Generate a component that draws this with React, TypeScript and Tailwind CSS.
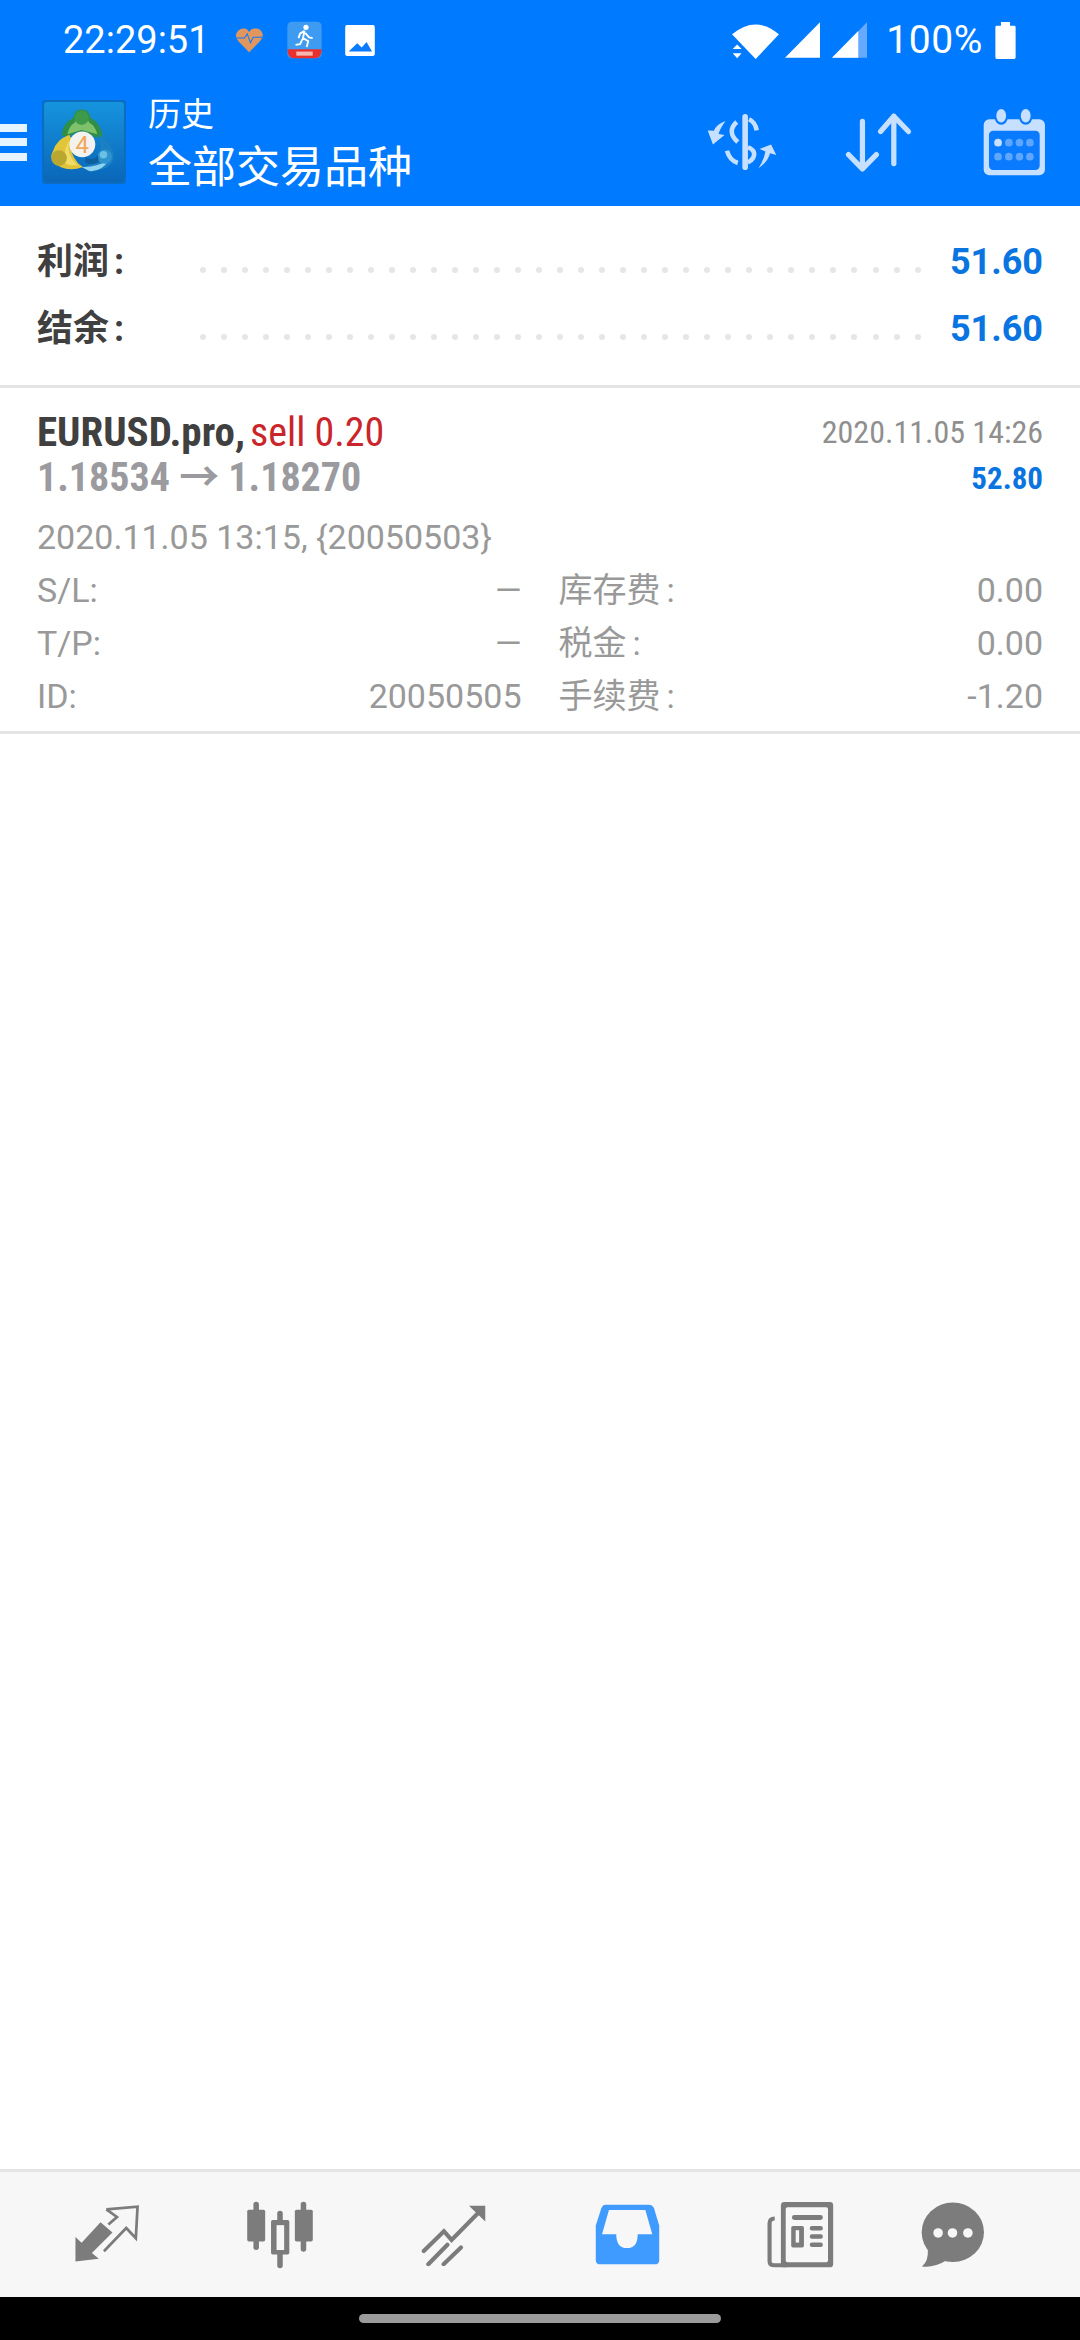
const Z = 'font-["Roboto","Noto_Sans_CJK_SC",sans-serif]';

function Heart() {
  return (
    <svg viewBox="680 82 86 76" className="w-[29px] h-[26px] ml-[25px]">
      <path d="M722,156 L690,124 Q680,112 684,100 Q692,84 710,86 Q718,88 722,96 Q728,86 738,86 Q756,84 762,102 Q764,114 754,124 Z" fill="#e0975f" />
      <path d="M684,114 L708,114 L716,102 L726,128 L734,112 L762,112" fill="none" stroke="#0a7bff" strokeWidth="3" />
    </svg>
  );
}

function Runner() {
  return (
    <svg viewBox="838 70 92 102" className="w-[35px] h-[38px] ml-[23px]">
      <rect x="838" y="72" width="92" height="98" rx="12" fill="#3d9cf2" />
      <circle cx="888" cy="87" r="7" fill="#fff" />
      <path d="M884,96 L872,104 L868,116 M884,96 L880,116 L894,124 L890,140 M880,116 L872,132 L860,134 M886,102 L896,114 L906,116" fill="none" stroke="#fff" strokeWidth="5" />
      <path d="M838,146 L930,146 Q930,170 912,170 L856,170 Q838,170 838,146 Z" fill="#e8302f" />
      <rect x="862" y="152" width="44" height="11" fill="#f7b7b0" />
    </svg>
  );
}

function ImageIcon() {
  return (
    <svg viewBox="1000 75 86 90" className="w-[30px] h-[31px] ml-[23px]">
      <rect x="1000" y="75" width="86" height="90" rx="6" fill="#fff" />
      <path d="M1010,152 L1035,128 L1048,140 L1062,124 L1078,152 Z" fill="#0a7bff" />
    </svg>
  );
}

function Wifi() {
  return (
    <svg viewBox="548 62 140 112" className="w-[48px] h-[39px]">
      <path d="M548,100 Q617,42 685,100 L617,172 Z" fill="#fff" />
      <path d="M550,143 L576,143 L563,130 Z M550,155 L576,155 L563,170 Z" fill="#fff" />
    </svg>
  );
}

function Signal({ dim }: { dim?: boolean }) {
  return (
    <svg viewBox="0 0 100 102" className="w-[35px] h-[36px]">
      <path d="M0,102 L100,0 L100,102 Z" fill={dim ? "#66aaff" : "#fff"} />
      {dim && <path d="M0,102 L75,25 L75,102 Z" fill="#fff" />}
    </svg>
  );
}

function Battery() {
  return (
    <svg viewBox="0 0 58 106" className="w-[21px] h-[37px]">
      <path d="M16,0 H42 V11 H54 Q58,11 58,15 V102 Q58,106 54,106 H4 Q0,106 0,102 V15 Q0,11 4,11 H16 Z" fill="#fff" />
    </svg>
  );
}

function MT4Logo() {
  return (
    <svg viewBox="12 10 246 246" className="w-[84px] h-[84px] shrink-0">
      <defs>
        <linearGradient id="lg" x1="0" y1="0" x2="0" y2="1">
          <stop offset="0" stopColor="#1694de" />
          <stop offset="1" stopColor="#0a66b8" />
        </linearGradient>
      </defs>
      <rect x="12" y="10" width="246" height="246" rx="10" fill="#0c6cc2" />
      <rect x="18" y="16" width="234" height="234" rx="8" fill="url(#lg)" />
      <path d="M128,38 Q150,38 154,62 Q186,78 190,120 L165,118 Q150,104 128,102 Q105,104 92,118 L70,114 Q72,78 104,62 Q108,38 128,38 Z" fill="#2f8f45" />
      <path d="M128,60 Q146,62 150,76 Q168,86 174,110 L128,98 L86,110 Q92,86 108,76 Q112,62 128,60 Z" fill="#7fc06a" />
      <circle cx="128" cy="62" r="21" fill="#3c9a4a" />
      <path d="M92,112 L100,128 Q88,160 118,196 L132,206 Q90,222 56,200 Q30,182 44,160 Q54,126 92,112 Z" fill="#e0c53a" />
      <path d="M92,128 Q80,168 116,200 Q88,204 78,192 Q76,150 92,128 Z" fill="#f0dc66" />
      <circle cx="62" cy="180" r="23" fill="#b9a730" />
      <path d="M176,112 Q212,130 222,166 Q226,200 190,212 Q160,222 128,206 Q170,200 182,176 Q186,140 176,112 Z" fill="#1b7fc4" />
      <path d="M128,206 Q172,208 208,186 Q186,222 150,218 Z" fill="#8ed4ee" />
      <circle cx="196" cy="176" r="21" fill="#2f93cf" />
      <circle cx="192" cy="170" r="11" fill="#6cc0e4" />
      <path d="M140,178 Q160,190 176,172 L178,192 Q156,204 138,192 Z" fill="#0d5f9e" />
      <circle cx="130" cy="140" r="38" fill="#f4f2ee" />
      <text x="130" y="166" textAnchor="middle" fontSize="70" fontFamily="Roboto, sans-serif" fill="#f0a95a">4</text>
    </svg>
  );
}

function DollarIcon() {
  return (
    <svg viewBox="480 345 200 160" className="w-[70px] h-[56px]" fill="#c8e0ff">
      <rect x="581" y="345" width="16" height="160" rx="8" />
      <path d="M565,368 Q535,395 568,425" fill="none" stroke="#c8e0ff" strokeWidth="13" />
      <path d="M600,360 Q618,368 622,392" fill="none" stroke="#c8e0ff" strokeWidth="13" />
      <path d="M597,440 Q622,450 612,470 Q606,480 597,483" fill="none" stroke="#c8e0ff" strokeWidth="13" />
      <path d="M537,450 Q545,478 568,485" fill="none" stroke="#c8e0ff" strokeWidth="13" />
      <path d="M533,365 Q505,375 500,393 L482,392 L497,432 L530,405 L513,402 Q518,385 533,365 Z" />
      <path d="M627,500 Q655,480 660,457 L678,462 L663,432 L630,445 L647,452 Q642,478 627,500 Z" />
    </svg>
  );
}

function SortIcon() {
  return (
    <svg viewBox="880 340 195 172" className="w-[68px] h-[60px]" fill="none" stroke="#c8e0ff" strokeWidth="15" strokeLinecap="round" strokeLinejoin="round">
      <path d="M930,367 V503 M890,462 L930,503 L970,462" />
      <path d="M1020,488 V352 M982,396 L1020,352 L1062,396" />
    </svg>
  );
}

function CalendarIcon() {
  const xs = [1326, 1357, 1387, 1417];
  return (
    <svg viewBox="1283 328 180 194" className="w-[63px] h-[68px]">
      <rect x="1285" y="360" width="175" height="160" rx="16" fill="#c8e0ff" />
      <rect x="1300" y="393" width="145" height="112" rx="12" fill="#0a7bff" />
      <ellipse cx="1335" cy="352" rx="19" ry="24" fill="#0a7bff" />
      <ellipse cx="1405" cy="352" rx="19" ry="24" fill="#0a7bff" />
      <ellipse cx="1335" cy="350" rx="14" ry="19" fill="#c8e0ff" />
      <ellipse cx="1405" cy="350" rx="14" ry="19" fill="#c8e0ff" />
      {xs.map((x, i) => (
        <circle key={x} cx={x} cy="427" r="11" fill={i === 0 ? "#c8e0ff" : "#5ea6ff"} />
      ))}
      {xs.map((x) => (
        <circle key={x} cx={x} cy="467" r="11" fill="#5ea6ff" />
      ))}
    </svg>
  );
}

function Dots() {
  return (
    <div className="flex-1 flex justify-between mt-[16px] ml-[73px] mr-[29px]">
      {Array.from({ length: 35 }).map((_, i) => (
        <span key={i} className="w-[6px] h-[6px] rounded-full bg-[#e6e6e6]" />
      ))}
    </div>
  );
}

function SummaryRow({ label, value }: { label: string; value: string }) {
  return (
    <div className="flex items-center h-[67px]">
      <span className="w-[90px] text-[36px] font-bold text-[#404040] leading-none whitespace-nowrap">
        {label}
        <span className="ml-[5px]">:</span>
      </span>
      <Dots />
      <span className="text-[36px] font-bold text-[#0a74e0] leading-none">{value}</span>
    </div>
  );
}

function Cell({ label, colon, value }: { label: string; colon?: boolean; value: string }) {
  return (
    <div className="flex justify-between items-center h-[53px] text-[34px] text-[#999999]">
      <span>
        {label}
        {colon && <span className="ml-[6px]">:</span>}
      </span>
      <span>{value}</span>
    </div>
  );
}

const navCell = "w-[173.5px] flex justify-center items-center";

function NavArrows() {
  return (
    <svg viewBox="215 165 195 172" className="w-[67px] h-[59px]">
      <path d="M222,258 L222,330 L290,322 L270,305 L330,245 L295,215 L240,275 Z" fill="#7c7c7c" />
      <path d="M312,178 L403,170 L398,262 L370,232 L305,300 M312,178 L343,200 L318,222" fill="none" stroke="#7c7c7c" strokeWidth="8" />
    </svg>
  );
}

function NavCandles() {
  return (
    <svg viewBox="715 150 196 197" className="w-[68px] h-[68px]" fill="#7c7c7c">
      <rect x="736" y="152" width="16" height="140" rx="8" />
      <rect x="718" y="175" width="52" height="92" rx="5" />
      <rect x="873" y="152" width="16" height="145" rx="8" />
      <rect x="856" y="175" width="52" height="92" rx="5" />
      <rect x="805" y="178" width="16" height="167" rx="8" />
      <rect x="787" y="205" width="53" height="100" rx="5" />
      <rect x="803" y="220" width="22" height="72" fill="#f7f7f7" />
    </svg>
  );
}

function NavTrend() {
  return (
    <svg viewBox="1222 155 190 178" className="w-[66px] h-[62px]" fill="none" stroke="#7c7c7c" strokeWidth="12" strokeLinecap="round">
      <path d="M1230,290 L1288,233 L1310,258 L1390,177" />
      <path d="M1243,328 L1298,272 M1287,328 L1337,280" />
      <path d="M1360,160 L1407,160 L1407,205 Z" fill="#7c7c7c" stroke="none" />
    </svg>
  );
}

function NavInbox() {
  return (
    <svg viewBox="160 158 187 176" className="w-[65px] h-[61px]">
      <path d="M190,160 L315,160 Q325,160 330,170 L345,220 L345,320 Q345,332 332,332 L175,332 Q162,332 162,320 L162,220 L178,170 Q182,160 190,160 Z" fill="#3f9bff" />
      <path d="M200,175 L305,175 L325,245 L283,245 Q283,285 252,285 Q221,285 221,245 L180,245 Z" fill="#f7f7f7" />
    </svg>
  );
}

function NavNews() {
  return (
    <svg viewBox="663 150 194 192" className="w-[67px] h-[66px]">
      <path d="M685,198 Q670,198 670,212 L670,322 Q670,334 685,334 L720,334" fill="none" stroke="#7c7c7c" strokeWidth="12" />
      <rect x="703" y="150" width="152" height="190" rx="10" fill="#7c7c7c" />
      <rect x="717" y="165" width="123" height="160" rx="5" fill="#f7f7f7" />
      <rect x="735" y="188" width="90" height="14" rx="7" fill="#7c7c7c" />
      <rect x="733" y="220" width="37" height="62" rx="5" fill="#7c7c7c" />
      <rect x="746" y="232" width="10" height="36" fill="#f7f7f7" />
      <rect x="787" y="220" width="38" height="13" rx="6" fill="#7c7c7c" />
      <rect x="787" y="244" width="38" height="13" rx="6" fill="#7c7c7c" />
      <rect x="787" y="268" width="38" height="13" rx="6" fill="#7c7c7c" />
    </svg>
  );
}

function NavChat() {
  return (
    <svg viewBox="1100 150 187 192" className="w-[64px] h-[66px]" fill="#7c7c7c">
      <ellipse cx="1193" cy="238" rx="91" ry="87" />
      <path d="M1120,290 Q1122,322 1103,338 Q1140,342 1175,320 Z" />
      <circle cx="1150" cy="240" r="14" fill="#f7f7f7" />
      <circle cx="1192" cy="240" r="14" fill="#f7f7f7" />
      <circle cx="1237" cy="240" r="14" fill="#f7f7f7" />
    </svg>
  );
}

export default function App() {
  return (
    <div className={`w-[1080px] h-[2340px] flex flex-col bg-white ${Z}`}>
      <header className="h-[206px] bg-[#007aff] text-white flex flex-col shrink-0">
        <div className="h-[80px] flex items-center pl-[63px] pr-[64px]">
          <span className="text-[38px] leading-none">22:29:51</span>
          <Heart />
          <Runner />
          <ImageIcon />
          <div className="ml-auto flex items-center">
            <Wifi />
            <div className="ml-[5px]"><Signal /></div>
            <div className="ml-[12px]"><Signal dim /></div>
            <span className="ml-[19px] text-[39px] leading-none tracking-[0.6px]">100%</span>
            <div className="ml-[12px]"><Battery /></div>
          </div>
        </div>
        <div className="flex-1 flex items-center pr-[34px] pb-[2px]">
          <div className="w-[27px] h-[37px] flex flex-col justify-between mr-[15px]">
            <span className="h-[8px] bg-[#e6f4ff]" />
            <span className="h-[8px] bg-[#e6f4ff]" />
            <span className="h-[8px] bg-[#e6f4ff]" />
          </div>
          <MT4Logo />
          <div className="ml-[22px] pt-[6px] flex flex-col">
            <span className="text-[33px] leading-[46px]">历史</span>
            <span className="text-[44px] leading-[60px]">全部交易品种</span>
          </div>
          <div className="ml-auto flex items-center">
            <DollarIcon />
            <div className="ml-[68px]"><SortIcon /></div>
            <div className="ml-[70px]"><CalendarIcon /></div>
          </div>
        </div>
      </header>

      <main className="flex-1 flex flex-col">
        <section className="px-[37px] pt-[22px] pb-[23px] border-b-[3px] border-[#e4e4e4]">
          <SummaryRow label="利润" value="51.60" />
          <SummaryRow label="结余" value="51.60" />
        </section>

        <section className="px-[37px] pt-[22px] pb-[8px] border-b-[3px] border-[#e4e4e4]">
          <div className="flex justify-between">
            <div>
              <div className="h-[45px] leading-[45px] text-[41px] font-bold font-stretch-condensed whitespace-nowrap">
                <span className="text-[#404040]">EURUSD.pro,</span>
                <span className="text-[#c9252b] font-normal text-[40px] ml-[5px]">sell 0.20</span>
              </div>
              <div className="h-[45px] leading-[45px] text-[40px] font-bold font-stretch-condensed text-[#9a9a9f]">
                1.18534 → 1.18270
              </div>
            </div>
            <div className="text-right">
              <div className="h-[45px] leading-[45px] text-[32px] font-stretch-condensed text-[#8f8f8f]">2020.11.05 14:26</div>
              <div className="h-[46px] leading-[48px] text-[31px] font-bold font-stretch-condensed text-[#0a74e0]">52.80</div>
            </div>
          </div>
          <div className="mt-[10px] h-[53px] leading-[53px] text-[34px] text-[#999999]">2020.11.05 13:15, {"{20050503}"}</div>
          <div className="grid grid-cols-2 gap-x-[37px]">
            <div>
              <Cell label="S/L:" value="—" />
              <Cell label="T/P:" value="—" />
              <Cell label="ID:" value="20050505" />
            </div>
            <div>
              <Cell label="库存费" colon value="0.00" />
              <Cell label="税金" colon value="0.00" />
              <Cell label="手续费" colon value="-1.20" />
            </div>
          </div>
        </section>
      </main>

      <nav className="h-[128px] bg-[#f7f7f7] border-t-[3px] border-[#e4e4e4] flex items-center pl-[20px] shrink-0">
        <div className={navCell}><NavArrows /></div>
        <div className={navCell}><NavCandles /></div>
        <div className={navCell}><NavTrend /></div>
        <div className={navCell}><NavInbox /></div>
        <div className={navCell}><NavNews /></div>
        <div className="ml-[33px]"><NavChat /></div>
      </nav>
      <div className="h-[43px] bg-black flex justify-center items-center shrink-0">
        <span className="w-[362px] h-[9px] rounded-full bg-[#9b9b9b]" />
      </div>
    </div>
  );
}
